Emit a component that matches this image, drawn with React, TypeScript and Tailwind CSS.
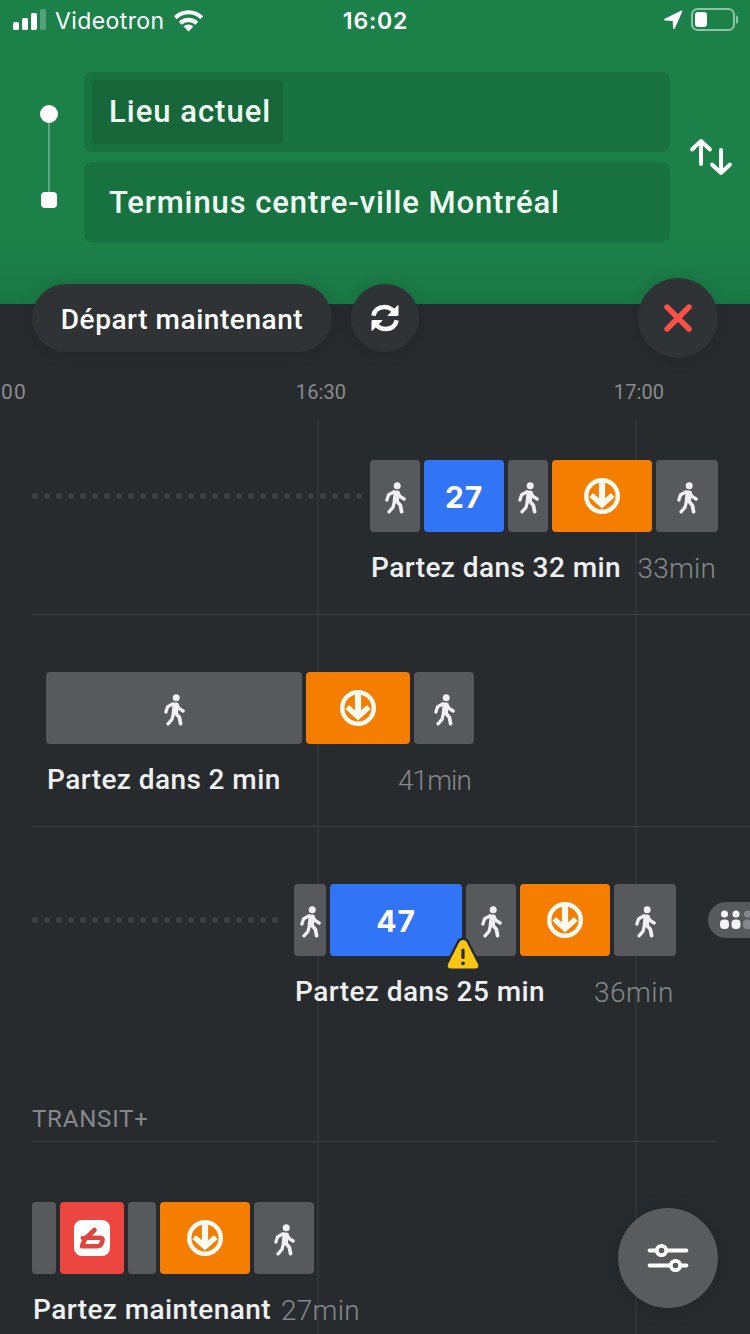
import type { ReactNode } from "react";

type Segment = {
  kind: "walk" | "bus" | "metro" | "bixi" | "blank";
  width: number;
  line?: string;
  alert?: boolean;
};

type Trip = {
  start: number;
  dots?: number;
  label: string;
  duration: string;
  durationClass: string;
  infoWidth: number;
  segments: Segment[];
};

const trips: Trip[] = [
  {
    start: 370,
    dots: 28,
    label: "Partez dans 32 min",
    duration: "33min",
    durationClass: "tracking-[0.2px]",
    infoWidth: 346,
    segments: [
      { kind: "walk", width: 50 },
      { kind: "bus", width: 80, line: "27" },
      { kind: "walk", width: 40 },
      { kind: "metro", width: 100 },
      { kind: "walk", width: 62 },
    ],
  },
  {
    start: 46,
    label: "Partez dans 2 min",
    duration: "41min",
    durationClass: "tracking-[-0.9px]",
    infoWidth: 425,
    segments: [
      { kind: "walk", width: 256 },
      { kind: "metro", width: 104 },
      { kind: "walk", width: 60 },
    ],
  },
  {
    start: 294,
    dots: 21,
    label: "Partez dans 25 min",
    duration: "36min",
    durationClass: "tracking-[0.5px]",
    infoWidth: 380,
    segments: [
      { kind: "walk", width: 32 },
      { kind: "bus", width: 132, line: "47", alert: true },
      { kind: "walk", width: 50 },
      { kind: "metro", width: 90 },
      { kind: "walk", width: 62 },
    ],
  },
];

const plusTrip: Trip = {
  start: 32,
  label: "Partez maintenant",
  duration: "27min",
  durationClass: "tracking-[0.3px]",
  infoWidth: 328,
  segments: [
    { kind: "blank", width: 24 },
    { kind: "bixi", width: 64 },
    { kind: "blank", width: 28 },
    { kind: "metro", width: 90 },
    { kind: "walk", width: 60 },
  ],
};

const segmentColors = {
  walk: "bg-[#58595c]",
  blank: "bg-[#58595c]",
  bus: "bg-[#3174f5]",
  metro: "bg-[#f57e00]",
  bixi: "bg-[#eb4640]",
};

function WalkIcon() {
  return (
    <svg className="mt-[3px] h-[32px] w-[21px] shrink-0" viewBox="0 0 21 32" fill="none">
      <circle cx="12.2" cy="3.8" r="3.5" fill="#f1eff3" />
      <path
        d="M7.600 8.400h4.800c1.400 0 2.300.7 2.400 1.900l.1 1.500-1 7.200-6.300.6.8-7.200z"
        fill="#f1eff3"
      />
      <g stroke="#f1eff3" strokeWidth="3.3" strokeLinecap="round" strokeLinejoin="round">
        <path d="M8.800 10 3.600 12.700 1.900 18" />
        <path d="M13 11.400l2.400 3.200 3.700 2.400" />
        <path d="M9.300 20.200 8 25.400l-4 4.400" />
        <path d="M11 18.200l4.400 5.200 1.200 6.300" strokeWidth="3.700" />
      </g>
    </svg>
  );
}

function MetroIcon() {
  return (
    <svg className="size-9 shrink-0" viewBox="0 0 36 36" fill="none" stroke="#fffaf2">
      <circle cx="18" cy="18" r="15.8" strokeWidth="4.4" />
      <path d="M18 3v24" strokeWidth="6.2" />
      <path d="M7.2 17 18 26.800 28.800 17" strokeWidth="5.500" />
    </svg>
  );
}

function BixiIcon() {
  return (
    <svg className="size-9 shrink-0" viewBox="0 0 36 36" fill="none" stroke="#dd453f" strokeLinejoin="round" strokeLinecap="round">
      <rect width="36" height="36" rx="8" fill="#fff" stroke="none" />
      <path d="M20.500 10 11.500 18.500" strokeWidth="4.600" />
      <path d="M8.500 18H16" strokeWidth="4" />
      <path d="M13 17.800H26c2.200 0 3 1.200 2.400 3l-.8 2.400c-.6 2-1.800 3-4 3H8L11 18.500" strokeWidth="4.600" />
    </svg>
  );
}

function AlertIcon() {
  return (
    <svg className="absolute -right-[20px] -bottom-[19px] z-10 h-[38px] w-[38px]" viewBox="0 0 38 38">
      <path
        d="M19 1.800c2.200 0 3.900 1 4.900 3L35 26.500c1.600 3.400-.2 6.200-3.900 6.200H6.900c-3.700 0-5.500-2.800-3.900-6.200L14.100 4.800c1-2 2.700-3 4.900-3z"
        fill="#fac60f"
        stroke="#272b2e"
        strokeWidth="2.500"
      />
      <path d="M19 13v7.500" stroke="#272b2e" strokeWidth="3.200" strokeLinecap="round" />
      <circle cx="19" cy="26.300" r="1.900" fill="#272b2e" />
    </svg>
  );
}

function SegmentBox({ kind, width, line, alert }: Segment) {
  return (
    <div
      className={`relative flex h-[72px] shrink-0 items-center justify-center rounded-[4px] ${segmentColors[kind]}`}
      style={{ width }}
    >
      {kind === "walk" && <WalkIcon />}
      {kind === "metro" && <MetroIcon />}
      {kind === "bixi" && <BixiIcon />}
      {kind === "bus" && (
        <span className="pt-[2px] font-[Inter,sans-serif] text-[30px] leading-none font-bold tracking-[0.8px] text-white">
          {line}
        </span>
      )}
      {alert && <AlertIcon />}
    </div>
  );
}

function TripRow({ trip }: { trip: Trip }) {
  return (
    <div className="flex flex-col gap-[18px]">
      <div className="flex">
        <div className="flex shrink-0 items-center pl-8" style={{ width: trip.start }}>
          {trip.dots && (
            <svg className="h-[6px] w-full" fill="#3f4347">
              {Array.from({ length: trip.dots }, (_, i) => (
                <circle key={i} cx={i * 12 + 3} cy="3" r="2.8" />
              ))}
            </svg>
          )}
        </div>
        <div className="flex gap-1">
          {trip.segments.map((s, i) => (
            <SegmentBox key={i} {...s} />
          ))}
        </div>
      </div>
      <div
        className="flex h-9 items-center justify-between text-[28px] leading-9 whitespace-nowrap"
        style={{ marginLeft: trip.start, width: trip.infoWidth }}
      >
        <span className="pl-px font-medium tracking-[0.42px] text-[#eef0f1]">{trip.label}</span>
        <span className={`pt-[2px] font-light text-[#85888a] ${trip.durationClass}`}>{trip.duration}</span>
      </div>
    </div>
  );
}

function StatusBar() {
  return (
    <div className="grid h-10 grid-cols-[1fr_auto_1fr] items-center pr-[11px] pl-3 font-[Inter,sans-serif] text-white">
      <div className="flex items-center">
        <svg className="h-[22px] w-[35px]" viewBox="0 0 35 22" fill="#fff">
          <rect x="1" y="13" width="6" height="8" rx="1.500" />
          <rect x="10" y="9" width="6" height="12" rx="1.500" />
          <rect x="19" y="4" width="6" height="17" rx="1.500" />
          <rect x="28" y="0" width="6" height="21" rx="1.500" opacity=".25" />
        </svg>
        <span className="ml-2 pt-[2px] text-[23px] tracking-[0.4px]">Videotron</span>
        <svg className="ml-[8px] h-[23px] w-[31px]" viewBox="0 0 31 23" fill="none" stroke="#fff" strokeWidth="4.200">
          <path d="M2.200 8.700a19 19 0 0 1 26.600 0" />
          <path d="M7.200 14.200a11.800 11.800 0 0 1 16.600 0" />
          <path d="M15.500 22.500l-4.900-4.900a7 7 0 0 1 9.800 0z" fill="#fff" stroke="none" />
        </svg>
      </div>
      <span className="pt-[2px] text-[23px] font-semibold tracking-[0.8px]">16:02</span>
      <div className="flex items-center justify-end gap-[8px]">
        <svg className="h-5 w-5" viewBox="0 0 20 20" fill="#fff">
          <path d="M19.300 1.400 11.800 18.500c-.4.900-1.600.8-1.700-.2L9.700 11 1.900 10.400c-1-.1-1.100-1.200-.2-1.600L18.300 .500c.7-.3 1.300.2 1 .9z" />
        </svg>
        <svg className="h-6 w-12" viewBox="0 0 48 24">
          <rect x="1" y="1" width="42" height="21" rx="5.500" fill="none" stroke="#8fc3a6" strokeWidth="2" />
          <rect x="4" y="4" width="12" height="15" rx="3" fill="#fff" />
          <path d="M46 8.500v6" stroke="#8fc3a6" strokeWidth="2" strokeLinecap="round" />
        </svg>
      </div>
    </div>
  );
}

function Field({ children }: { children: ReactNode }) {
  return <div className="flex items-center rounded-lg bg-[#187240] px-2">{children}</div>;
}

function Header() {
  return (
    <header className="h-[304px] bg-gradient-to-b from-[#1c8049] from-80% to-[#1a7744] text-[#effff4]">
      <StatusBar />
      <div className="flex pt-8">
        <div className="flex w-[84px] flex-col items-center pt-[33px] pl-[13px]">
          <div className="size-[18px] rounded-full bg-white" />
          <div className="h-[69px] w-[2px] bg-[#5ba87d]" />
          <div className="size-4 rounded-[4px] bg-white" />
        </div>
        <div className="grid w-[586px] grid-rows-[80px_80px] gap-[10px] text-[31px] font-medium tracking-[0.9px]">
          <Field>
            <div className="flex h-16 w-[191px] items-center rounded bg-[#17673a] pt-px pl-[17px]">
              <span className="tracking-[1px] whitespace-nowrap">Lieu actuel</span>
            </div>
          </Field>
          <Field>
            <span className="pt-[2px] pl-[17px] whitespace-nowrap">Terminus centre-ville Montréal</span>
          </Field>
        </div>
        <svg
          className="mt-[66px] ml-[19px] h-[38px] w-[44px]"
          viewBox="0 0 44 38"
          fill="none"
          stroke="#fff"
          strokeWidth="4"
          strokeLinecap="round"
          strokeLinejoin="round"
        >
          <path d="M12 26V3M3 11.500l9-8.500 9 8.500" />
          <path d="M32 12v23M23 26.500l9 8.500 9-8.500" />
        </svg>
      </div>
    </header>
  );
}

function Controls() {
  return (
    <div className="relative -mt-[26px] flex h-20 items-center px-8">
      <button className="h-[68px] w-[300px] rounded-full bg-[#2f3335] pt-[3px] text-[28px] font-medium whitespace-nowrap tracking-[0.55px] text-white shadow-[0_2px_16px_rgba(0,0,0,0.14)]">
        Départ maintenant
      </button>
      <button className="ml-[19px] flex size-[68px] items-center justify-center rounded-full bg-[#2f3335] shadow-[0_2px_16px_rgba(0,0,0,0.14)]">
        <svg className="size-[30px]" viewBox="0 0 30 30" fill="none" stroke="#fff" strokeWidth="4.500">
          <path d="M3.300 12.800C4.600 7 9 4 14.500 4c3.800 0 6.500 1.300 9 4" />
          <path d="M26.700 17.200C25.400 23 21 26 15.500 26c-3.800 0-6.500-1.300-9-4" />
          <path d="M28 2.500v10H18z" fill="#fff" stroke="#fff" strokeWidth="1" strokeLinejoin="round" />
          <path d="M2 27.500v-10h10z" fill="#fff" stroke="#fff" strokeWidth="1" strokeLinejoin="round" />
        </svg>
      </button>
      <button className="ml-auto flex size-20 items-center justify-center rounded-full bg-[#2f3335] shadow-[0_2px_16px_rgba(0,0,0,0.14)]">
        <svg className="size-7" viewBox="0 0 28 28" stroke="#fa5048" strokeWidth="5.400" strokeLinecap="round">
          <path d="M3 3l22 22M25 3 3 25" />
        </svg>
      </button>
    </div>
  );
}

export default function App() {
  return (
    <div className="relative h-[1334px] w-[750px] overflow-hidden bg-[#272b2d] font-[Roboto,sans-serif]">
      {/* Half-hour grid lines, behind the trips */}
      <div className="absolute top-[420px] bottom-0 left-[317px] w-[2px] bg-[#303437]" />
      <div className="absolute top-[420px] bottom-0 left-[635px] w-[2px] bg-[#303437]" />

      <Header />
      <Controls />

      <div className="relative">
        {/* Time axis */}
        <div className="flex h-[45px] pt-[21px] text-[20px] leading-[26px] tracking-[0.1px] text-[#898c8e]">
          <span className="w-[161px] shrink-0 pl-px text-[21px] tracking-[1.2px]">00</span>
          <span className="w-[320px] shrink-0 text-center">16:30</span>
          <span className="w-[316px] shrink-0 text-center">17:00</span>
        </div>

        <div className="ml-8 border-b border-[#3b3f41] pb-[28px]">
          <div className="-ml-8 pt-[57px]">
            <TripRow trip={trips[0]} />
          </div>
        </div>
        <div className="ml-8 border-b border-[#3b3f41] pb-[28px]">
          <div className="-ml-8 pt-[57px]">
            <TripRow trip={trips[1]} />
          </div>
        </div>
        <div className="relative pt-[57px]">
          <TripRow trip={trips[2]} />
          {/* Crowding pill running off the right edge */}
          <div className="absolute top-[75px] left-[708px] flex h-9 w-[60px] items-center rounded-full bg-[#58595c] pl-3">
            <svg className="h-5 w-12" viewBox="0 0 48 20" fill="#f4f4f6">
              <circle cx="4.500" cy="4" r="3.500" />
              <rect x="0" y="9.500" width="9" height="9.500" rx="4" />
              <circle cx="16" cy="4" r="3.500" />
              <rect x="11.500" y="9.500" width="9" height="9.500" rx="4" />
              <g fill="#85878a">
                <circle cx="27.500" cy="4" r="3.500" />
                <rect x="23" y="9.500" width="9" height="9.500" rx="4" />
              </g>
            </svg>
          </div>
        </div>

        <div className="mx-8 mt-[93px] border-b border-[#3b3f41] pb-[6px] text-[24px] leading-[32px] tracking-[0.8px] text-[#85888a]">
          TRANSIT+
        </div>
        <div className="pt-[60px]">
          <TripRow trip={plusTrip} />
        </div>
      </div>

      <button className="absolute top-[1208px] left-[618px] flex size-[100px] items-center justify-center rounded-full bg-[#595b5d] shadow-[0_2px_20px_rgba(0,0,0,0.15)]">
        <svg className="h-[32px] w-[42px]" viewBox="0 0 42 32" fill="none" stroke="#fff" strokeWidth="3.800" strokeLinecap="round">
          <path d="M2.500 8.500h37M2.500 23.500h37" />
          <circle cx="14.500" cy="8.500" r="4.700" fill="#595b5d" />
          <circle cx="28.500" cy="23.500" r="4.700" fill="#595b5d" />
        </svg>
      </button>
    </div>
  );
}
